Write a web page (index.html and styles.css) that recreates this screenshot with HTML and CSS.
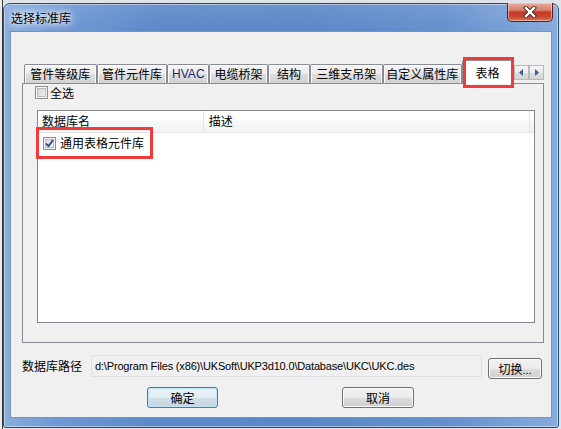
FILE: index.html
```html
<!DOCTYPE html>
<html>
<head>
<meta charset="utf-8">
<link rel="stylesheet" href="styles.css">
</head>
<body>
<div class="desk">
  <div class="window">
    <div class="titlebar">
      <span class="title">选择标准库</span>
      <div class="close">
        <svg width="14" height="12" viewBox="0 0 14 12">
          <path d="M3 2 L11 10 M11 2 L3 10" stroke="#3a2420" stroke-width="4.2" stroke-linecap="square"/>
          <path d="M3 2 L11 10 M11 2 L3 10" stroke="#ffffff" stroke-width="2.4" stroke-linecap="square"/>
        </svg>
      </div>
    </div>
    <div class="client">
      <div class="tabstrip">
        <div class="tab w1">管件等级库</div>
        <div class="tab w2">管件元件库</div>
        <div class="tab w3 latin">HVAC</div>
        <div class="tab w4">电缆桥架</div>
        <div class="tab w5">结构</div>
        <div class="tab w6">三维支吊架</div>
        <div class="tab w7">自定义属性库</div>
        <div class="tab selected">表格<span class="mark tab-mark"></span></div>
        <div class="spin">
          <span class="arrow"><svg width="5" height="7" viewBox="0 0 5 7"><path d="M4 0 L0 3.5 L4 7 Z" fill="#3d5f98"/></svg></span>
          <span class="arrow"><svg width="5" height="7" viewBox="0 0 5 7"><path d="M1 0 L5 3.5 L1 7 Z" fill="#3d5f98"/></svg></span>
        </div>
      </div>
      <div class="page">
        <div class="check-all"><span class="cb"></span><span>全选</span></div>
        <div class="list">
          <div class="list-head">
            <div class="col c1">数据库名</div>
            <div class="col c2">描述</div>
            <div class="col c3"></div>
          </div>
          <div class="row">
            <span class="cb checked">
              <svg width="9" height="9" viewBox="0 0 9 9"><path d="M1 4.5 L3.5 7.2 L8 1" fill="none" stroke="#2c3f8a" stroke-width="1.8"/></svg>
            </span>
            <span>通用表格元件库</span>
          </div>
          <span class="mark row-mark"></span>
        </div>
      </div>
      <div class="path-row">
        <span class="label">数据库路径</span>
        <div class="field">d:\Program Files (x86)\UKSoft\UKP3d10.0\Database\UKC\UKC.des</div>
        <div class="btn switch">切换<span class="latin">...</span></div>
      </div>
      <div class="btn-row">
        <div class="btn default ok">确定</div>
        <div class="btn cancel">取消</div>
      </div>
    </div>
  </div>
</div>
</body>
</html>
```

FILE: styles.css
```css
* { box-sizing: border-box; }
html, body { margin: 0; padding: 0; }
body {
  width: 561px;
  height: 429px;
  overflow: hidden;
  font-family: "Noto Sans CJK SC", "Noto Sans", sans-serif;
  font-size: 12px;
  color: #000;
}
.desk {
  width: 561px;
  height: 429px;
  padding: 3px 0 0 3px;
  background: linear-gradient(to right, #e9ebee 0, #e9ebee 2px, #3c3c3c 2px, #3c3c3c 3px, #dfe3e8 3px);
}
.window {
  width: 556px;
  height: 425px;
  border: 1px solid #2a4a73;
  border-radius: 7px 7px 3px 3px;
  background:
    linear-gradient(to bottom, rgba(255,255,255,0.10) 0, rgba(255,255,255,0) 28px),
    linear-gradient(to right, #88addf 0%, #6e98d3 10%, #5b88c8 28%, #5a87c7 55%, #6590cd 80%, #86abdd 100%);
  box-shadow: inset 0 0 0 1px rgba(255,255,255,0.45);
  padding: 0 6px 9px 6px;
  display: flex;
  flex-direction: column;
}
.titlebar {
  height: 27px;
  display: flex;
  justify-content: space-between;
  align-items: flex-start;
}
.title {
  align-self: center;
  margin-left: 0;
  margin-top: 1px;
  line-height: 16px;
  padding: 0 1px;
  text-shadow: 0 0 5px #fff, 0 0 9px rgba(255,255,255,0.9), 0 0 12px rgba(255,255,255,0.7);
}
.close {
  width: 46px;
  height: 19px;
  margin-top: -1px;
  margin-right: -1px;
  border: 1px solid #5a1e16;
  border-top: none;
  border-radius: 0 0 5px 5px;
  background: linear-gradient(to bottom, #e9a899 0%, #d8826f 40%, #c23a24 50%, #c8462f 75%, #d9765c 100%);
  box-shadow: inset 0 0 0 1px rgba(255,220,210,0.55);
  display: flex;
  align-items: center;
  justify-content: center;
}
.client {
  height: 387px;
  border: 1px solid #7892b8;
  background: #f0f0f0;
  padding: 28px 7px 0 11px;
  display: flex;
  flex-direction: column;
}
.tabstrip {
  height: 23px;
  display: flex;
  align-items: flex-end;
  padding-left: 2px;
  position: relative;
  z-index: 1;
}
.tab {
  height: 19px;
  border: 1px solid #898c95;
  border-bottom: none;
  border-radius: 2px 2px 0 0;
  background: linear-gradient(to bottom, #f4f4f4 0%, #ebebeb 50%, #dddddd 51%, #d2d2d2 100%);
  box-shadow: inset 1px 1px 0 #fcfcfc, inset -1px 0 0 #fcfcfc;
  text-align: center;
  line-height: 18px;
  white-space: nowrap;
}
.w1 { width: 73px; }
.w2 { width: 71px; }
.w3 { width: 42px; }
.w4 { width: 59px; }
.w5 { width: 42px; }
.w6 { width: 73px; }
.w7 { width: 80px; }
.latin { font-family: "Liberation Sans", "Noto Sans CJK SC", sans-serif; font-size: 11px; }
.tab.latin { color: #1f2a78; font-size: 12px; }
.tab.selected {
  width: 51px;
  height: 24px;
  margin-bottom: -1px;
  background: #ffffff;
  box-shadow: none;
  position: relative;
  line-height: 22px;
  padding-top: 1px;
}
.mark {
  position: absolute;
  border: 3px solid #f23a3a;
}
.tab-mark {
  left: 0px;
  top: -4px;
  width: 51px;
  height: 31px;
}
.spin {
  display: flex;
  margin-left: 1px;
  margin-bottom: 3px;
}
.arrow {
  width: 15px;
  height: 15px;
  border: 1px solid #b6b9bf;
  background: linear-gradient(to bottom, #f5f5f5 0%, #ececec 50%, #dedede 51%, #d5d5d5 100%);
  display: flex;
  align-items: center;
  justify-content: center;
}
.page {
  width: 522px;
  height: 260px;
  border: 1px solid #898c95;
  background: #f0f0f0;
  padding: 0 8px 19px 14px;
  display: flex;
  flex-direction: column;
}
.check-all {
  height: 17px;
  display: flex;
  align-items: center;
  margin-left: -2px;
  gap: 2px;
  line-height: 16px;
}
.cb {
  width: 13px;
  height: 13px;
  border: 1px solid #8e8f8f;
  background: linear-gradient(135deg, #c9cbce 0%, #e4e5e7 55%, #f6f6f6 100%);
  box-shadow: inset 0 0 0 1px #f4f4f4, inset 0 0 0 2px #b9bcc0;
  display: flex;
  align-items: center;
  justify-content: center;
  flex: none;
}
.cb.checked {
  background: linear-gradient(135deg, #d4d6d9 0%, #e9eaec 55%, #f8f8f8 100%);
}
.list {
  margin-top: 9px;
  height: 213px;
  border: 1px solid #828790;
  background: #ffffff;
  position: relative;
}
.list-head {
  height: 22px;
  display: flex;
  border-bottom: 1px solid #e5e5e5;
  background: linear-gradient(to bottom, #ffffff 0%, #ffffff 45%, #f7f8fa 46%, #f2f3f5 100%);
}
.col {
  height: 21px;
  line-height: 20px;
  padding-left: 4px;
  border-right: 1px solid #e3e5e8;
}
.c1 { width: 166px; }
.c2 { width: 327px; padding-left: 5px; }
.c3 { flex: 1; border-right: none; }
.row {
  height: 18px;
  display: flex;
  align-items: center;
  padding-left: 5px;
  gap: 4px;
  margin-top: 1px;
  line-height: 16px;
}
.row-mark {
  left: -2px;
  top: 16px;
  width: 117px;
  height: 32px;
}
.path-row {
  margin-top: 12px;
  height: 24px;
  display: flex;
  align-items: flex-start;
}
.label {
  width: 69px;
  line-height: 22px;
}
.field {
  width: 391px;
  height: 22px;
  border: 1px solid #dcdfe3;
  background: #f0f0f0;
  padding-left: 3px;
  line-height: 20px;
  font-family: "Liberation Sans", "Noto Sans CJK SC", sans-serif;
  font-size: 11px;
  letter-spacing: -0.17px;
  white-space: nowrap;
  overflow: hidden;
}
.btn {
  height: 21px;
  border: 1px solid #707070;
  border-radius: 3px;
  background: linear-gradient(to bottom, #f2f2f2 0%, #ebebeb 50%, #dddddd 51%, #cfcfcf 100%);
  box-shadow: inset 0 0 0 1px #fbfbfb;
  text-align: center;
  line-height: 19px;
}
.switch {
  width: 54px;
  margin-left: 6px;
  margin-top: 3px;
}
.btn-row {
  margin-top: 8px;
  display: flex;
  padding-left: 125px;
  gap: 124px;
}
.ok { width: 71px; }
.cancel { width: 72px; }
.btn.default {
  border-color: #3c7fb1;
  background: linear-gradient(to bottom, #eaf3f9 0%, #e2ecf3 50%, #d2dfe8 51%, #c6d5e0 100%);
  box-shadow: inset 0 0 0 1px #bfe6f8;
}
```
